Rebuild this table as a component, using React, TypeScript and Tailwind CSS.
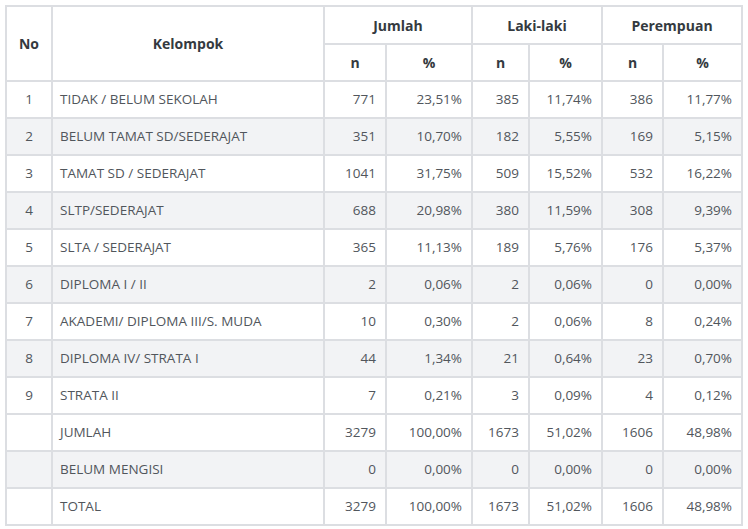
import React from "react";

const rows: [string, string, string, string, string, string, string, string][] = [
  ["1", "TIDAK / BELUM SEKOLAH", "771", "23,51%", "385", "11,74%", "386", "11,77%"],
  ["2", "BELUM TAMAT SD/SEDERAJAT", "351", "10,70%", "182", "5,55%", "169", "5,15%"],
  ["3", "TAMAT SD / SEDERAJAT", "1041", "31,75%", "509", "15,52%", "532", "16,22%"],
  ["4", "SLTP/SEDERAJAT", "688", "20,98%", "380", "11,59%", "308", "9,39%"],
  ["5", "SLTA / SEDERAJAT", "365", "11,13%", "189", "5,76%", "176", "5,37%"],
  ["6", "DIPLOMA I / II", "2", "0,06%", "2", "0,06%", "0", "0,00%"],
  ["7", "AKADEMI/ DIPLOMA III/S. MUDA", "10", "0,30%", "2", "0,06%", "8", "0,24%"],
  ["8", "DIPLOMA IV/ STRATA I", "44", "1,34%", "21", "0,64%", "23", "0,70%"],
  ["9", "STRATA II", "7", "0,21%", "3", "0,09%", "4", "0,12%"],
  ["", "JUMLAH", "3279", "100,00%", "1673", "51,02%", "1606", "48,98%"],
  ["", "BELUM MENGISI", "0", "0,00%", "0", "0,00%", "0", "0,00%"],
  ["", "TOTAL", "3279", "100,00%", "1673", "51,02%", "1606", "48,98%"],
];

const cell = "border-r-2 border-b-2 border-[#dcdee2] flex items-center";
const head = "justify-center font-bold text-[14px] text-[#343a40]";

export default function App() {
  return (
    <div className="w-[748px] h-[529px] bg-white pl-[5px] pt-[5px]" style={{ fontFamily: '"Open Sans", sans-serif' }}>
      <div className="grid w-[738px] grid-cols-[46px_272px_62px_86px_57px_73px_61px_79px] border-t-2 border-l-2 border-[#dcdee2] text-[13.5px] text-[#51565c]">
        <div className={`${cell} ${head} row-span-2`}>No</div>
        <div className={`${cell} ${head} row-span-2`}>Kelompok</div>
        <div className={`${cell} ${head} col-span-2 h-[38px]`}>Jumlah</div>
        <div className={`${cell} ${head} col-span-2 h-[38px]`}>Laki-laki</div>
        <div className={`${cell} ${head} col-span-2 h-[38px]`}>Perempuan</div>
        {["n", "%", "n", "%", "n", "%"].map((t, i) => (
          <div key={i} className={`${cell} ${head} h-[37px]`}>{t}</div>
        ))}
        {rows.map((r, ri) => {
          const striped = ri < 9 ? ri % 2 === 1 : (ri - 9) % 2 === 1;
          const bg = striped ? "bg-[#f2f3f5]" : "bg-white";
          return (
            <React.Fragment key={ri}>
              <div className={`${cell} ${bg} h-[37px] justify-center`}>{r[0]}</div>
              <div className={`${cell} ${bg} h-[37px] pl-[7px]`}>{r[1]}</div>
              {r.slice(2).map((v, ci) => (
                <div key={ci} className={`${cell} ${bg} h-[37px] justify-end pr-[9px]`}>{v}</div>
              ))}
            </React.Fragment>
          );
        })}
      </div>
    </div>
  );
}
